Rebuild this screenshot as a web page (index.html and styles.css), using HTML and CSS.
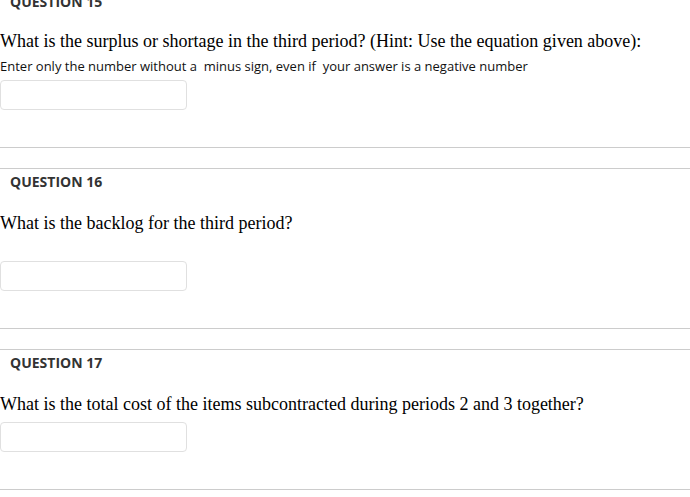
FILE: index.html
```html
<!DOCTYPE html>
<html lang="en">
<head>
<meta charset="utf-8">
<title>Questions</title>
<link rel="stylesheet" href="styles.css">
</head>
<body>
<div class="questions">
  <section class="question first">
    <h3 class="label">QUESTION 15</h3>
    <p class="text">What is the surplus or shortage in the third period? (Hint: Use the equation given above):</p>
    <p class="note">Enter only the number without a &nbsp;minus sign, even if &nbsp;your answer is a negative number</p>
    <input class="answer" type="text">
  </section>
  <section class="question">
    <h3 class="label">QUESTION 16</h3>
    <p class="text">What is the backlog for the third period?</p>
    <p class="text spacer">&nbsp;</p>
    <input class="answer" type="text">
  </section>
  <section class="question">
    <h3 class="label">QUESTION 17</h3>
    <p class="text">What is the total cost of the items subcontracted during periods 2 and 3 together?</p>
    <input class="answer" type="text">
  </section>
</div>
</body>
</html>
```
FILE: styles.css
```css
html, body {
  margin: 0;
  padding: 0;
  background: #ffffff;
}

.questions {
  display: flex;
  flex-direction: column;
  gap: 20px;
}

.question {
  border-top: 1px solid #cccccc;
  border-bottom: 1px solid #cccccc;
  padding: 3px 0 37px 0;
  display: flex;
  flex-direction: column;
  align-items: flex-start;
}

.question.first {
  margin-top: -12px;
  border-top-color: transparent;
}

.label {
  margin: 0 0 21px 0;
  padding: 0 10px;
  font-family: "Open Sans", "Liberation Sans", sans-serif;
  font-weight: 700;
  font-size: 14px;
  line-height: 20px;
  color: #333333;
}

.question.first .label {
  margin-bottom: 19px;
}

.text {
  margin: 0;
  font-family: "Liberation Serif", "Times New Roman", serif;
  font-size: 18px;
  line-height: 21px;
  color: #000000;
}

.text.spacer {
  line-height: 20px;
}

.note {
  margin: 7px 0 0 0;
  font-family: "Open Sans", "Liberation Sans", sans-serif;
  font-size: 13px;
  line-height: 14px;
  color: #111111;
}

.answer {
  margin: 7px 0 0 0;
  width: 187px;
  height: 30px;
  box-sizing: border-box;
  border: 1px solid #e0e0e0;
  border-radius: 4px;
  background: #ffffff;
  padding: 0 6px;
  outline: none;
}
```
